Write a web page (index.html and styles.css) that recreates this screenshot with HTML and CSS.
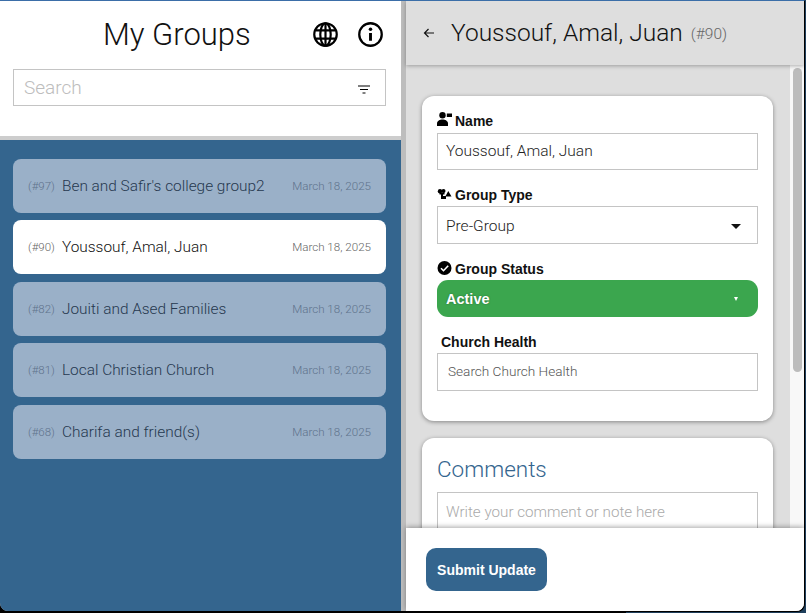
FILE: index.html
```html
<!DOCTYPE html>
<html lang="en">
<head>
<meta charset="utf-8">
<title>My Groups</title>
<link rel="stylesheet" href="styles.css">
</head>
<body>
<div class="app">
  <aside class="list-pane">
    <header class="list-head">
      <div class="title-row">
        <h1 class="title">My Groups</h1>
        <div class="head-icons">
          <svg class="head-icon" viewBox="0 0 24 24" fill="none" stroke="#000" stroke-width="2.100"><circle cx="12" cy="12" r="10.800"/><ellipse cx="12" cy="12" rx="5" ry="10.800"/><path d="M2 8h20M2 16h20M12 1v22"/></svg>
          <svg class="head-icon" viewBox="0 0 24 24" fill="none" stroke="#000" stroke-width="2.200"><circle cx="12" cy="12" r="10.800"/><path d="M12 10.500V18" stroke-width="2.800"/><circle cx="12" cy="7" r="1.700" fill="#000" stroke="none"/></svg>
        </div>
      </div>
      <div class="search">
        <span class="search-text">Search</span>
        <svg class="filter" viewBox="0 0 12 9" fill="none" stroke="#000" stroke-width="1.100"><path d="M0 1h12M2 4.500h8M4.500 8h3"/></svg>
      </div>
    </header>
    <div class="groups">
      <div class="group"><span class="gid">(#97)</span><span class="gname">Ben and Safir's college group2</span><span class="gdate">March 18, 2025</span></div>
      <div class="group selected"><span class="gid">(#90)</span><span class="gname">Youssouf, Amal, Juan</span><span class="gdate">March 18, 2025</span></div>
      <div class="group"><span class="gid">(#82)</span><span class="gname">Jouiti and Ased Families</span><span class="gdate">March 18, 2025</span></div>
      <div class="group"><span class="gid">(#81)</span><span class="gname">Local Christian Church</span><span class="gdate">March 18, 2025</span></div>
      <div class="group"><span class="gid">(#68)</span><span class="gname">Charifa and friend(s)</span><span class="gdate">March 18, 2025</span></div>
    </div>
  </aside>
  <main class="detail-pane">
    <header class="detail-head">
      <svg class="back" viewBox="0 0 12 10" fill="none" stroke="#111" stroke-width="1.200"><path d="M11 5H1.500M5.500 1 1.500 5l4 4"/></svg>
      <h2 class="detail-title">Youssouf, Amal, Juan</h2>
      <span class="detail-id">(#90)</span>
    </header>
    <div class="detail-body">
      <div class="detail-scroll">
        <section class="card card-main">
          <div class="label label-name">
            <svg class="label-icon" viewBox="0 0 15 14" fill="#000"><circle cx="5.500" cy="3.300" r="3.200"/><path d="M0 14v-2.500C0 9 2.800 7.500 5.500 7.500S11 9 11 11.500V14z"/><rect x="9.800" y="1.500" width="5.200" height="3.500"/></svg>
            <span>Name</span>
          </div>
          <div class="field field-name">Youssouf, Amal, Juan</div>
          <div class="label">
            <svg class="label-icon icon-type" viewBox="0 0 14 10" fill="#000"><circle cx="2.500" cy="2.200" r="2.200"/><circle cx="6" cy="2" r="2"/><path d="M2 3.500h5v2H5.500v1.500H8.500V10H3.500V5.500H2z"/><path d="M10.800 2 14 7.500H7.800z"/></svg>
            <span>Group Type</span>
          </div>
          <div class="field select"><span>Pre-Group</span><span class="caret"></span></div>
          <div class="label">
            <svg class="label-icon icon-status" viewBox="0 0 14 14"><circle cx="7" cy="7" r="7" fill="#000"/><path d="M3.500 7.200 6 9.700l4.700-5" fill="none" stroke="#fff" stroke-width="1.600"/></svg>
            <span>Group Status</span>
          </div>
          <div class="status"><span>Active</span><span class="caret caret-small"></span></div>
          <div class="label label-plain">Church Health</div>
          <div class="field field-search">Search Church Health</div>
        </section>
        <section class="card card-comments">
          <h3 class="comments-title">Comments</h3>
          <div class="comment-box">Write your comment or note here</div>
        </section>
      </div>
      <div class="scrollbar"><div class="thumb"></div></div>
    </div>
    <footer class="detail-foot">
      <button class="submit" type="button">Submit Update</button>
    </footer>
  </main>
</div>
</body>
</html>
```
FILE: styles.css
```css
* { box-sizing: border-box; }
html, body { margin: 0; height: 100%; }
body {
  background: linear-gradient(to right, #000 626px, #1f3f5c 626px);
  font-family: "Liberation Sans", Arial, sans-serif;
  overflow: hidden;
}
.app {
  display: flex;
  width: 804px;
  height: 611px;
  border-top: 1px solid #3b6ea8;
  border-radius: 0 0 8px 8px;
  box-shadow: 1px 1px 0 #000;
  overflow: hidden;
  background: #bdbdbd;
}
.list-pane {
  width: 401px;
  display: flex;
  flex-direction: column;
  flex: none;
}
.list-head {
  height: 139px;
  background: #fff;
  border-bottom: 4px solid #cdcdcd;
  padding: 0 15px 0 13px;
  flex: none;
}
.title-row {
  display: flex;
  align-items: center;
  height: 68px;
  padding-left: 90px;
}
.title {
  margin: 0;
  font-family: Roboto, "Liberation Sans", sans-serif;
  font-size: 31px;
  font-weight: 300;
  color: #111;
  flex: 1;
  line-height: 68px;
}
.head-icons {
  display: flex;
  gap: 20px;
  margin-right: 3px;
  margin-top: -2px;
}
.head-icon { width: 25px; height: 25px; display: block; }
.search {
  height: 37px;
  border: 1px solid #c4c4c4;
  display: flex;
  align-items: center;
  justify-content: space-between;
  padding: 0 15px 0 10px;
}
.search-text {
  font-family: Roboto, "Liberation Sans", sans-serif;
  font-size: 19px;
  font-weight: 300;
  color: #bdbdbd;
}
.filter { width: 12px; height: 9px; margin-top: 3px; }
.groups {
  flex: 1;
  background: #34658e;
  padding: 19px 15px 0 13px;
  display: flex;
  flex-direction: column;
  gap: 7.400px;
}
.group {
  height: 54px;
  border-radius: 8px;
  background: #9ab0c8;
  display: flex;
  align-items: center;
  padding: 0 15px;
  color: #26384f;
  font-family: Roboto, "Liberation Sans", sans-serif;
  font-weight: 300;
}
.group.selected { background: #fff; color: #111; }
.gid { font-size: 11.500px; color: #5f738c; width: 34px; flex: none; }
.gname { font-size: 15.400px; flex: 1; }
.gdate { font-size: 11.600px; color: #5f738c; }
.selected .gid, .selected .gdate { color: #666; }
.detail-pane {
  margin-left: 5px;
  flex: 1;
  display: flex;
  flex-direction: column;
  min-width: 0;
  background: #dedede;
}
.detail-head {
  height: 64px;
  flex: none;
  display: flex;
  align-items: center;
  background: #dedede;
  padding-left: 17px;
  box-shadow: 0 1px 4px rgba(0,0,0,.3);
  position: relative;
  z-index: 1;
}
.back { width: 12px; height: 10px; margin-right: 16px; }
.detail-title {
  margin: 0 0 2px;
  font-family: Roboto, "Liberation Sans", sans-serif;
  font-size: 24.500px;
  font-weight: 300;
  color: #111;
}
.detail-id {
  font-family: Roboto, "Liberation Sans", sans-serif;
  font-weight: 300;
  font-size: 15.500px;
  color: #666;
  margin-left: 8px;
  margin-top: 1px;
}
.detail-body {
  flex: 1;
  min-height: 0;
  display: flex;
  overflow: hidden;
}
.detail-scroll {
  width: 384px;
  flex: none;
  padding: 31px 17px 0 16px;
}
.card {
  background: #fff;
  border-radius: 12px;
  box-shadow: 0 1px 4px rgba(0,0,0,.4);
  padding: 15px;
}
.card-main { height: 325px; padding-top: 14px; }
.card-comments { margin-top: 17px; padding-top: 18px; }
.label {
  display: flex;
  align-items: flex-end;
  gap: 3px;
  font-size: 14px;
  font-weight: 700;
  color: #111;
  height: 20px;
  margin-bottom: 3px;
}
.label-name { height: 19px; margin-bottom: 4px; }
.label-icon { width: 15px; height: 14px; margin-bottom: 3px; }
.icon-type { height: 10px; margin-bottom: 4px; }
.icon-status { margin-bottom: 2px; }
.field {
  height: 37px;
  border: 1px solid #c4c4c4;
  padding: 0 8px;
  display: flex;
  align-items: center;
  font-family: Roboto, "Liberation Sans", sans-serif;
  font-weight: 300;
  font-size: 15.500px;
  color: #222;
  margin-bottom: 14px;
}
.field-name { margin-bottom: 13px; padding-bottom: 2px; }
.select { justify-content: space-between; height: 38px; margin-bottom: 13px; padding-right: 16px; padding-top: 2px; }
.caret {
  width: 0;
  height: 0;
  border-left: 5px solid transparent;
  border-right: 5px solid transparent;
  border-top: 5px solid #111;
}
.caret-small {
  border-left-width: 2.500px;
  border-right-width: 2.500px;
  border-top: 4px solid #fff;
  margin-right: 2px;
}
.status {
  height: 37px;
  border-radius: 11px;
  background: #3ba64e;
  color: #fff;
  font-size: 14.500px;
  font-weight: 700;
  display: flex;
  align-items: center;
  justify-content: space-between;
  padding: 0 18px 0 9px;
  margin-bottom: 14px;
  text-shadow: 0 0 2px rgba(0,0,0,.35);
}
.label-plain { padding-left: 4px; height: 19px; margin-bottom: 3px; }
.field-search { font-size: 13.600px; font-weight: 300; color: #555; padding: 0 10px 2px; height: 38px; }
.comments-title {
  margin: 0 0 10px;
  font-family: Roboto, "Liberation Sans", sans-serif;
  font-size: 22.500px;
  font-weight: 300;
  color: #34658e;
  line-height: 26px;
}
.comment-box {
  height: 60px;
  border: 1px solid #c4c4c4;
  padding: 10px 8px;
  font-family: Roboto, "Liberation Sans", sans-serif;
  font-weight: 300;
  font-size: 15.200px;
  color: #aaa;
}
.scrollbar {
  flex: 1;
  padding: 3px 2px 0 3px;
  background: #f8f8f8;
}
.thumb {
  height: 304px;
  background: #bcbcbc;
  border-radius: 5px;
}
.detail-foot {
  height: 83px;
  flex: none;
  background: #fff;
  padding: 20px;
  box-shadow: 0 -1px 5px rgba(0,0,0,.35);
  position: relative;
  z-index: 1;
}
.submit {
  display: block;
  width: 121px;
  height: 43px;
  border: 0;
  border-radius: 10px;
  background: #34658e;
  color: #fff;
  font: 700 14px "Liberation Sans", Arial, sans-serif;
}
```
